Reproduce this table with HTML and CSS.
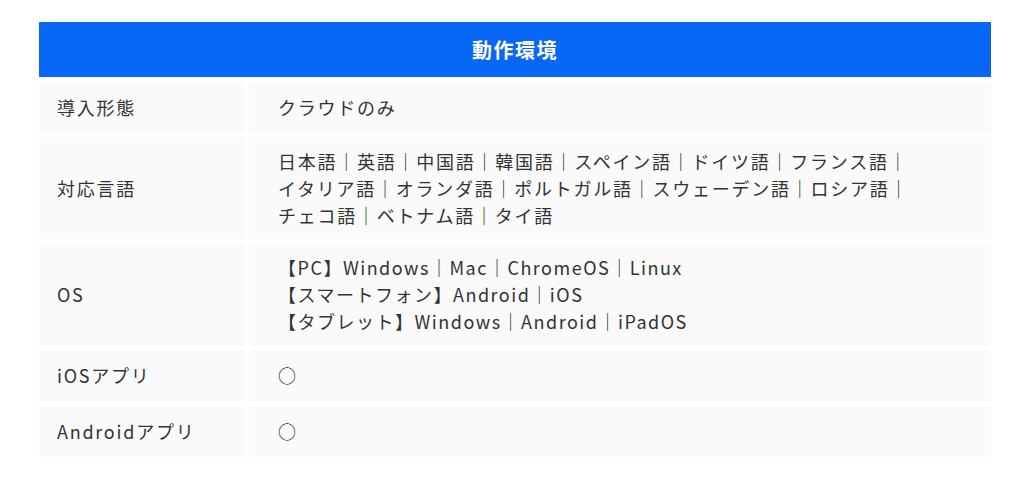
FILE: index.html
```html
<!DOCTYPE html>
<html lang="ja">
<head>
<meta charset="utf-8">
<title>動作環境</title>
<link rel="stylesheet" href="styles.css">
</head>
<body>
<div class="wrap">
  <div class="spec">
    <div class="head">動作環境</div>
    <div class="label">導入形態</div>
    <div class="value">クラウドのみ</div>
    <div class="label">対応言語</div>
    <div class="value">日本語｜英語｜中国語｜韓国語｜スペイン語｜ドイツ語｜フランス語｜<br>イタリア語｜オランダ語｜ポルトガル語｜スウェーデン語｜ロシア語｜<br>チェコ語｜ベトナム語｜タイ語</div>
    <div class="label">OS</div>
    <div class="value value-latin">【PC】Windows｜Mac｜ChromeOS｜Linux<br>【スマートフォン】Android｜iOS<br>【タブレット】Windows｜Android｜iPadOS</div>
    <div class="label">iOSアプリ</div>
    <div class="value">○</div>
    <div class="label">Androidアプリ</div>
    <div class="value">○</div>
  </div>
</div>
</body>
</html>
```

FILE: styles.css
```css
html, body {
  margin: 0;
  padding: 0;
  background: #ffffff;
}
.wrap {
  padding: 22px 0 0 39px;
}
.spec {
  width: 952px;
  display: grid;
  grid-template-columns: 206px 1fr;
  column-gap: 4px;
  row-gap: 4.5px;
  font-family: "Noto Sans CJK JP", "Noto Sans", sans-serif;
  font-size: 18px;
  letter-spacing: 1.75px;
  color: #333333;
}
.head {
  grid-column: 1 / 3;
  height: 55px;
  background: #0967f5;
  color: #ffffff;
  font-size: 20px;
  font-weight: 700;
  letter-spacing: 1.5px;
  display: flex;
  align-items: center;
  justify-content: center;
}
.label, .value {
  background: #fafafa;
  line-height: 27px;
  display: flex;
  align-items: center;
}
.label {
  padding: 12px 0 12px 18px;
}
.value {
  padding: 10.5px 0 10.5px 29px;
}
.value-latin {
  letter-spacing: 1.5px;
}
```
